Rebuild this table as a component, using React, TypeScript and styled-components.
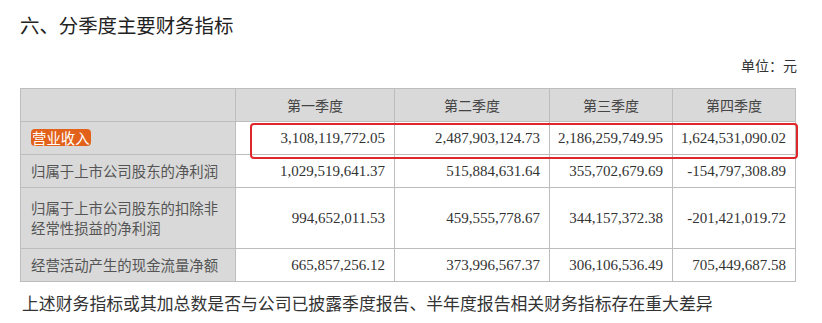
import React from "react";
import styled, { createGlobalStyle } from "styled-components";

const Global = createGlobalStyle`
  html, body { margin: 0; padding: 0; background: #ffffff; }
  body { font-family: "Noto Sans CJK SC", "Noto Sans", sans-serif; }
`;

const Page = styled.div`
  width: 822px;
  height: 323px;
  box-sizing: border-box;
  padding: 11px 0 0 20px;
  background: #fff;
  overflow: hidden;
`;

const Title = styled.h1`
  margin: 0;
  font-size: 19.4px;
  font-weight: 400;
  line-height: 28px;
  color: #222;
`;

const Unit = styled.div`
  width: 777px;
  margin-top: 16px;
  text-align: right;
  font-size: 14px;
  line-height: 20px;
  color: #333;
`;

const TableWrap = styled.div`
  position: relative;
  width: 775px;
  margin-top: 13px;
`;

const Table = styled.table`
  border-collapse: collapse;
  table-layout: fixed;
  width: 775px;
`;

const HeadCell = styled.th<{ $w: number }>`
  width: ${(p) => p.$w}px;
  height: 33px;
  padding: 0;
  box-sizing: border-box;
  background: #d9d9d9;
  border: 1px solid #bdbdbd;
  font-weight: 400;
  font-size: 14px;
  color: #444;
  text-align: center;
`;

const Label = styled.td<{ $tall?: boolean }>`
  height: ${(p) => (p.$tall ? 61 : 33)}px;
  padding: 0 8px 0 10px;
  box-sizing: border-box;
  background: #d9d9d9;
  border: 1px solid #bdbdbd;
  font-size: 14.4px;
  line-height: 20px;
  color: #555;
  text-align: left;
`;

const Num = styled.td`
  padding: 0 9px 0 0;
  box-sizing: border-box;
  background: #fff;
  border: 1px solid #bdbdbd;
  font-family: "Liberation Serif", "Times New Roman", serif;
  font-size: 15px;
  color: #333;
  text-align: right;
`;

const Highlight = styled.span`
  display: inline-block;
  background: #e2621c;
  color: #fff;
  border-radius: 4px;
  padding: 0 1px;
  line-height: 17px;
`;

const RedBox = styled.div`
  position: absolute;
  left: 230px;
  top: 35px;
  width: 548px;
  height: 36px;
  box-sizing: border-box;
  border: 2.5px solid #e0262b;
  border-radius: 4px;
  pointer-events: none;
`;

const Footer = styled.p`
  margin: 9px 0 0 2px;
  font-size: 16.85px;
  line-height: 24px;
  color: #333;
`;

const widths = [215, 159, 155, 123, 123];
const heads = ["", "第一季度", "第二季度", "第三季度", "第四季度"];

const rows: { label: React.ReactNode; values: string[]; tall?: boolean }[] = [
  {
    label: <Highlight>营业收入</Highlight>,
    values: ["3,108,119,772.05", "2,487,903,124.73", "2,186,259,749.95", "1,624,531,090.02"],
  },
  {
    label: "归属于上市公司股东的净利润",
    values: ["1,029,519,641.37", "515,884,631.64", "355,702,679.69", "-154,797,308.89"],
  },
  {
    label: (
      <>
        归属于上市公司股东的扣除非
        <br />
        经常性损益的净利润
      </>
    ),
    values: ["994,652,011.53", "459,555,778.67", "344,157,372.38", "-201,421,019.72"],
    tall: true,
  },
  {
    label: "经营活动产生的现金流量净额",
    values: ["665,857,256.12", "373,996,567.37", "306,106,536.49", "705,449,687.58"],
  },
];

export default function App() {
  return (
    <>
      <Global />
      <Page>
        <Title>六、分季度主要财务指标</Title>
        <Unit>单位：元</Unit>
        <TableWrap>
          <Table>
            <thead>
              <tr>
                {heads.map((h, i) => (
                  <HeadCell key={i} $w={widths[i]}>
                    {h}
                  </HeadCell>
                ))}
              </tr>
            </thead>
            <tbody>
              {rows.map((r, i) => (
                <tr key={i}>
                  <Label $tall={r.tall}>{r.label}</Label>
                  {r.values.map((v, j) => (
                    <Num key={j}>{v}</Num>
                  ))}
                </tr>
              ))}
            </tbody>
          </Table>
          <RedBox />
        </TableWrap>
        <Footer>上述财务指标或其加总数是否与公司已披露季度报告、半年度报告相关财务指标存在重大差异</Footer>
      </Page>
    </>
  );
}
